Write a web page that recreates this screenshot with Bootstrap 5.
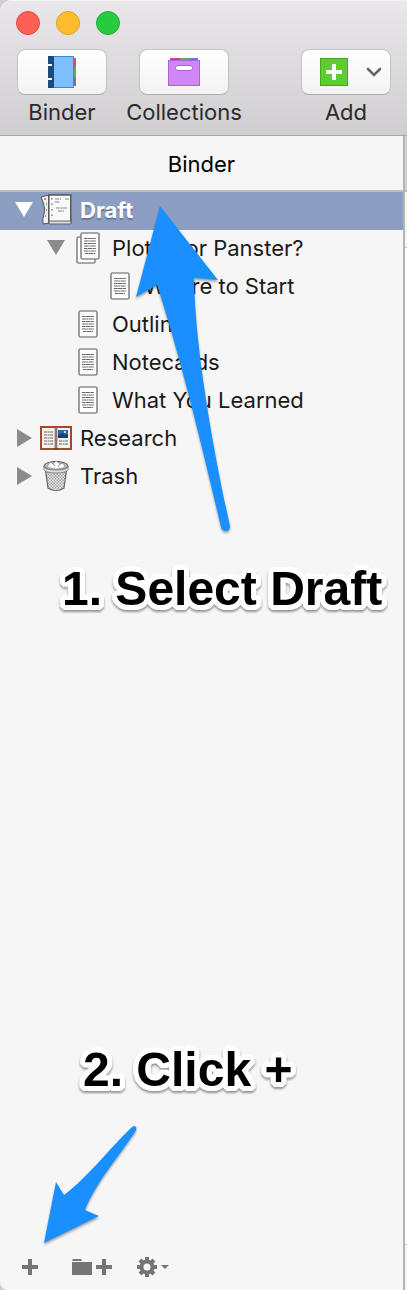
<!DOCTYPE html>
<html lang="en">
<head>
<meta charset="utf-8">
<meta name="viewport" content="width=device-width, initial-scale=1">
<title>Binder</title>
<link rel="stylesheet" href="https://cdn.jsdelivr.net/npm/bootstrap@5.3.0/dist/css/bootstrap.min.css">
<style>
body { font-family: Inter, "Liberation Sans", sans-serif; font-size: 22px; line-height: 28px; color: #1c1c1c; background: #d0ced0; }
svg { display: block; flex: none; }
.window { border-radius: 12px 0 0 8px; background: #f6f6f6; overflow: hidden; }
.toolbar { height: 136px; padding: 10px 16px 0; background: linear-gradient(#e9e7e9, #d0ced0); border-top: 1px solid #f4f3f4; border-bottom: 1px solid #a9a8a9; }
.lights { gap: 16px; height: 24px; }
.light { width: 24px; height: 24px; border-radius: 50%; border: 1px solid; padding: 0; }
.light-red { background: #fe5f57; border-color: #e2463f; }
.light-yellow { background: #febc2e; border-color: #dfa023; }
.light-green { background: #28cb40; border-color: #1dae30; }
.tools { gap: 32px; padding: 14px 0 0 1px; }
.tool { width: 90px; }
.tool-btn { width: 90px; height: 46px; border: 1px solid #c3c1c3; border-bottom-color: #aeacae; border-radius: 8px; background: linear-gradient(#fff, #f3f3f3); padding: 0; }
.tool-name { font-size: 22px; line-height: 34px; white-space: nowrap; color: #2b2a2b; }
.pane-title { height: 56px; line-height: 56px; font-size: 22px; border-bottom: 2px solid #bdbdbd; color: #000; }
.tree-row { height: 38px; padding-bottom: 2px; font-size: 22px; }
.tree-row a { color: #1a1a1a; text-decoration: none; white-space: nowrap; }
.level-0 { padding-left: 8px; }
.level-1 { padding-left: 40px; }
.level-2 { padding-left: 72px; }
.toggle { width: 32px; height: 36px; padding: 0; border: 0; background: none; color: #8b8b8b; }
.item-icon { width: 32px; margin-right: 8px; }
.picked { background: #8c9fc2; }
.picked .toggle { color: #fff; }
.picked a { color: #fff; font-weight: 700; text-shadow: 0 2px 1px #66779a; }
.callout-text { font-family: "Liberation Sans", Arial, sans-serif; font-weight: 700; font-size: 48px; line-height: 56px; color: #000; white-space: nowrap; filter: drop-shadow(0 2px 1px #0006);
  text-shadow: 5px 0 #fff, 5px 2px #fff, 4px 3px #fff, 3px 4px #fff, 2px 5px #fff, 0 5px #fff, -2px 5px #fff, -3px 4px #fff, -4px 3px #fff, -5px 2px #fff, -5px 0 #fff, -5px -2px #fff, -4px -3px #fff, -3px -4px #fff, -2px -5px #fff, 0 -5px #fff, 2px -5px #fff, 3px -4px #fff, 4px -3px #fff, 5px -2px #fff, 2px 2px #fff, -2px 2px #fff, 2px -2px #fff, -2px -2px #fff; }
.step-one { margin: 65px 0 0 62px; }
.step-two { margin: auto 0 146px 83px; }
.pointer { position: absolute; z-index: 2; pointer-events: none; fill: #1a8fff; filter: drop-shadow(0 2px 1px #0005); }
.pointer-draft { left: 128px; top: 8px; }
.pointer-add { left: 36px; bottom: 40px; }
.footer-bar { height: 46px; padding-left: 22px; }
.footer-bar button { padding: 0; border: 0; background: none; color: #757575; }
.gap-folder { margin-left: 34px; }
.gap-gear { margin-left: 25px; }
.editor-edge { width: 4px; border-left: 2px solid #b4b4b4; background: #fff; }
.edge-head { height: 56px; background: #d3d1d3; border-bottom: 2px solid #bdbdbd; }
.edge-sub { height: 56px; background: #f6f6f6; border-bottom: 1px solid #bdbdbd; }
.edge-foot { height: 46px; background: #f6f6f6; border-top: 1px solid #bdbdbd; }
</style>
</head>
<body>
<svg width="0" height="0" class="position-absolute" aria-hidden="true">
  <defs>
    <symbol id="page" viewBox="0 0 20 28">
      <rect x="1" y="1" width="18" height="26" rx="1.5" fill="#fff" stroke="#8d8d8d" stroke-width="1.7"/>
      <g stroke="#666" stroke-width="1" fill="none">
        <path stroke-dasharray="3 .4 5 .4" d="M4 6.500h12M4 11.500h12M4 16.500h12M5 21.500h10"/>
        <path stroke-dasharray="4 .4 2 .4" d="M4 9h12M4 14h12M4 19h12"/>
      </g>
    </symbol>
    <symbol id="down" viewBox="0 0 18 16"><path d="M0 0h18L9 15z" fill="currentColor"/></symbol>
    <symbol id="right" viewBox="0 0 16 18"><path d="M1 0v18l15-9z" fill="currentColor"/></symbol>
    <symbol id="plus" viewBox="0 0 16 16"><path d="M6 0h4v6h6v4h-6v6H6v-6H0V6h6z" fill="currentColor"/></symbol>
    <pattern id="mesh" width="3" height="3" patternUnits="userSpaceOnUse"><path d="M0 0h1.5v1.5H0zM1.5 1.5H3V3H1.5z" fill="#999"/></pattern>
  </defs>
</svg>
<div class="window d-flex flex-column min-vh-100">
  <header class="toolbar">
    <div class="lights d-flex">
      <button class="light light-red" aria-label="Close"></button>
      <button class="light light-yellow" aria-label="Minimize"></button>
      <button class="light light-green" aria-label="Zoom"></button>
    </div>
    <div class="tools d-flex">
      <div class="tool d-flex flex-column align-items-center">
        <button class="tool-btn d-flex align-items-center justify-content-center" aria-labelledby="t1">
          <svg width="28" height="32" viewBox="0 0 28 32">
            <path d="M24 2h4v9h-4z" fill="#dc4a78"/><path d="M24 11h4v10h-4z" fill="#58b348"/><path d="M24 21h4v9h-4z" fill="#6779c4"/>
            <rect width="26" height="32" fill="#3d86d2"/><rect x="6" y="1" width="19" height="30" fill="#80bfff"/>
            <rect width="6" height="32" fill="#174c80"/><path d="M0 8h4v2H0zM0 22h4v2H0z" fill="#fff"/>
          </svg>
        </button>
        <span class="tool-name" id="t1">Binder</span>
      </div>
      <div class="tool d-flex flex-column align-items-center">
        <button class="tool-btn d-flex align-items-center justify-content-center" aria-labelledby="t2">
          <svg width="32" height="28" viewBox="0 0 32 28">
            <path d="M2 0h10v3H2z" fill="#d8436e"/><path d="M12 0h10v3H12z" fill="#58b348"/><path d="M22 0h8v3h-8z" fill="#6779c4"/>
            <rect x=".5" y="2.500" width="31" height="25" fill="#cf87f8" stroke="#ad61dc"/>
            <rect x="7.500" y="7.500" width="17" height="5" rx="2.500" fill="#fff" stroke="#ad61dc"/>
          </svg>
        </button>
        <span class="tool-name" id="t2">Collections</span>
      </div>
      <div class="tool d-flex flex-column align-items-center ms-auto">
        <button class="tool-btn d-flex align-items-center justify-content-end gap-3 pe-1" aria-labelledby="t3">
          <svg width="28" height="28" viewBox="0 0 28 28">
            <rect x=".5" y=".5" width="27" height="27" fill="#60ca31" stroke="#43a91f"/>
            <path d="M12 6h4v6h6v4h-6v6h-4v-6H6v-4h6z" fill="#fff"/>
          </svg>
          <svg width="22" height="12" viewBox="0 0 22 12"><path d="M4 3l6 6 6-6" fill="none" stroke="#666" stroke-width="2.600" stroke-linecap="round"/></svg>
        </button>
        <span class="tool-name" id="t3">Add</span>
      </div>
    </div>
  </header>

  <div class="d-flex flex-grow-1">
    <main class="position-relative flex-grow-1 d-flex flex-column">
      <div class="pane-title text-center">Binder</div>
      <div class="position-relative">
        <ul class="list-unstyled mb-0">
          <li class="tree-row level-0 picked d-flex align-items-center">
            <button class="toggle d-flex align-items-center justify-content-center" aria-label="Collapse Draft"><svg width="18" height="16"><use href="#down"/></svg></button>
            <span class="item-icon"><svg width="32" height="32" viewBox="0 0 32 32">
              <path d="M1 3l8-2v28l-6 1q-1-5 1-10 2-6-3-17z" fill="#f0f0f0" stroke="#555"/>
              <path d="M4 5h2M6 10h1M6 16h1M5 22h1" stroke="#444"/>
              <rect x="8.800" y="1" width="22" height="28" fill="#f8f8f8" stroke="#555" stroke-width="1.500"/>
              <path d="M9 27h22v3H9z" fill="#ddd" stroke="#666"/>
              <path d="M12 4v22" stroke="#555" stroke-dasharray="1.500 4"/>
              <path d="M15 5h6m4 0h4M15 8h5M16 14h11M18 17h6" stroke="#888" stroke-dasharray="4 .6 2 .5"/>
            </svg></span>
            <a href="#draft">Draft</a>
          </li>
          <li class="tree-row level-1 d-flex align-items-center">
            <button class="toggle d-flex align-items-center justify-content-center" aria-label="Collapse Plotter or Panster?"><svg width="18" height="16"><use href="#down"/></svg></button>
            <span class="item-icon d-flex justify-content-center"><svg width="24" height="32" viewBox="0 0 24 32">
              <rect x="1" y="5" width="18" height="26" rx="1.500" fill="#fff" stroke="#8d8d8d" stroke-width="1.700"/>
              <use href="#page" x="4" y="0" width="20" height="28"/>
            </svg></span>
            <a href="#plotter">Plotter or Panster?</a>
          </li>
          <li class="tree-row level-2 d-flex align-items-center">
            <span class="toggle"></span>
            <span class="item-icon d-flex justify-content-center"><svg width="20" height="28"><use href="#page"/></svg></span>
            <a href="#start">Where to Start</a>
          </li>
          <li class="tree-row level-1 d-flex align-items-center">
            <span class="toggle"></span>
            <span class="item-icon d-flex justify-content-center"><svg width="20" height="28"><use href="#page"/></svg></span>
            <a href="#outline">Outline</a>
          </li>
          <li class="tree-row level-1 d-flex align-items-center">
            <span class="toggle"></span>
            <span class="item-icon d-flex justify-content-center"><svg width="20" height="28"><use href="#page"/></svg></span>
            <a href="#notecards">Notecards</a>
          </li>
          <li class="tree-row level-1 d-flex align-items-center">
            <span class="toggle"></span>
            <span class="item-icon d-flex justify-content-center"><svg width="20" height="28"><use href="#page"/></svg></span>
            <a href="#learned">What You Learned</a>
          </li>
          <li class="tree-row level-0 d-flex align-items-center">
            <button class="toggle d-flex align-items-center justify-content-center" aria-label="Expand Research"><svg width="16" height="18"><use href="#right"/></svg></button>
            <span class="item-icon"><svg width="32" height="24" viewBox="0 0 32 24">
              <rect width="32" height="24" fill="#9c4a32"/><rect x="2" y="2" width="28" height="20" fill="#f5f2ee"/>
              <path d="M14 2h4v20h-4z" fill="#c9c5c0"/><path d="M15.500 2h1v21h-1z" fill="#5c2d20"/>
              <path d="M4 6h9M4 9h9M4 12h9M4 15h9M4 18h9M19 15h9M19 18h9" stroke="#666" stroke-dasharray="3 .6 2 .5"/>
              <rect x="18" y="4" width="10" height="8" fill="#2c69aa"/><path d="M18 12v-3l4-2 3 2 3-1v4z" fill="#173f70"/><circle cx="25" cy="6" r="1" fill="#fff"/>
            </svg></span>
            <a href="#research">Research</a>
          </li>
          <li class="tree-row level-0 d-flex align-items-center">
            <button class="toggle d-flex align-items-center justify-content-center" aria-label="Expand Trash"><svg width="16" height="18"><use href="#right"/></svg></button>
            <span class="item-icon d-flex justify-content-center"><svg width="26" height="32" viewBox="0 0 26 32">
              <path d="M2 7l3 21q8 5 16 0l3-21z" fill="#f4f4f4"/><path d="M2 10l3 17q8 5 16 0l3-17z" fill="url(#mesh)"/>
              <path d="M2 7l3 21q8 5 16 0l3-21" fill="none" stroke="#666" stroke-width="1.200"/>
              <ellipse cx="13" cy="6" rx="12" ry="4.500" fill="#bbb" stroke="#555"/>
              <path d="M4 7l3-5 3 2 3-3 4 3 3-1 2 4q-8 4-18 0z" fill="#fff" stroke="#888" stroke-width=".7"/>
              <path d="M10 4l2 2M17 4l-2 3" fill="none" stroke="#777" stroke-width=".8"/>
              <path d="M1 6q0 4 12 4t12-4v4q-2 3-12 3T1 10z" fill="#dcdcdc" stroke="#777" stroke-width=".8"/>
            </svg></span>
            <a href="#trash">Trash</a>
          </li>
        </ul>
        <svg class="pointer pointer-draft" width="104" height="340" viewBox="0 0 104 340" aria-hidden="true">
          <path d="M32 6L90 80 66 78C67 145 84 245 102 326Q102 331 98 331 94 331 93 327C75 250 52 155 29 85L8 97z"/>
        </svg>
      </div>

      <div class="callout-text step-one">1. Select Draft</div>
      <div class="callout-text step-two">2. Click +</div>

      <svg class="pointer pointer-add" width="104" height="130" viewBox="0 0 104 130" aria-hidden="true">
        <path d="M8 123L20 62 28 75C50 59 74 28 96 7Q98 5 100 7 101 9 99 12C84 35 60 62 49 90L63 96z"/>
      </svg>
      <footer class="footer-bar d-flex align-items-center">
        <button aria-label="Add item"><svg width="16" height="16"><use href="#plus"/></svg></button>
        <button class="gap-folder d-flex gap-1" aria-label="Add folder">
          <svg width="20" height="16" viewBox="0 0 20 16"><path d="M1 0h8l1 2H0zM0 3h20v13H0z" fill="currentColor"/></svg>
          <svg width="16" height="16"><use href="#plus"/></svg>
        </button>
        <button class="gap-gear d-flex align-items-center gap-1" aria-label="Actions">
          <svg width="20" height="20" viewBox="-10 -10 20 20" stroke="currentColor" fill="none">
            <circle r="5.500" stroke-width="4"/>
            <path stroke-width="4" d="M0-10v4M0 6v4M-10 0h4M6 0h4M-7-7l3 3M4 4l3 3M-7 7l3-3M4-4l3-3"/>
          </svg>
          <svg width="8" height="4" viewBox="0 0 8 4"><path d="M0 0h8L4 4z" fill="currentColor"/></svg>
        </button>
      </footer>
    </main>
    <div class="editor-edge d-flex flex-column">
      <div class="edge-head"></div>
      <div class="edge-sub"></div>
      <div class="edge-foot mt-auto"></div>
    </div>
  </div>
</div>
<script src="https://cdn.jsdelivr.net/npm/bootstrap@5.3.0/dist/js/bootstrap.bundle.min.js"></script>
</body>
</html>
